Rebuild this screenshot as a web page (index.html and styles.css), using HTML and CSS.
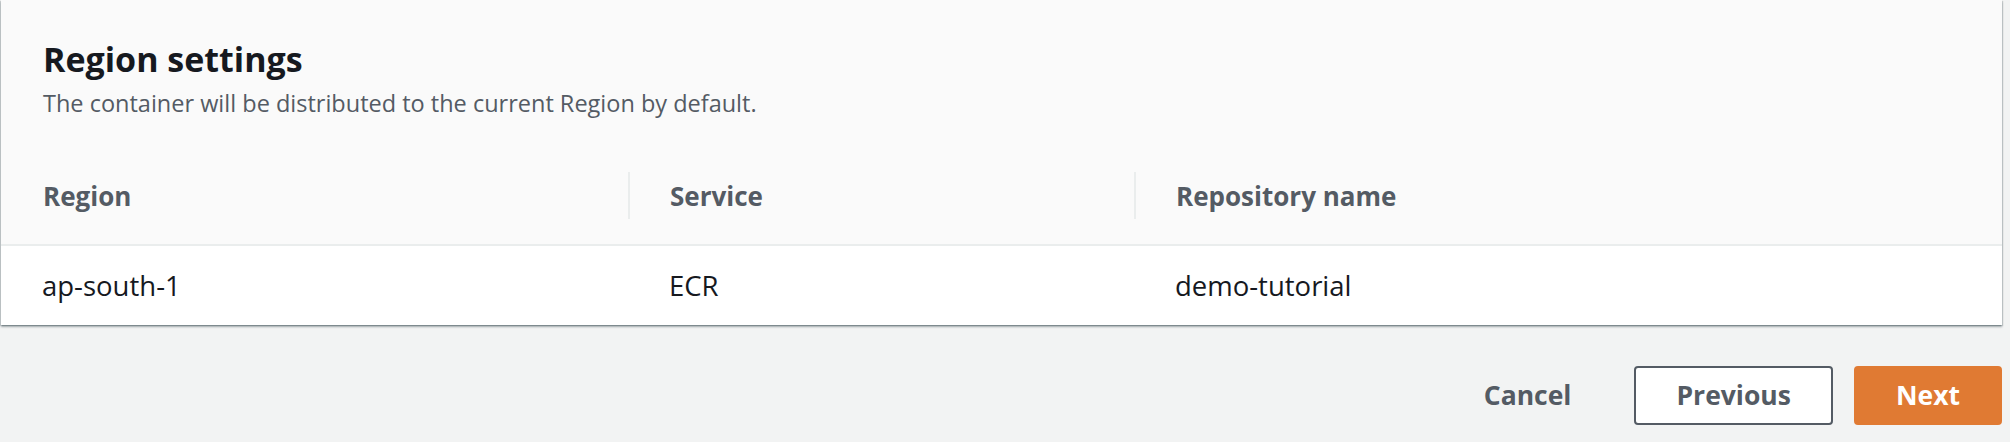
FILE: index.html
```html
<!DOCTYPE html>
<html lang="en">
<head>
<meta charset="utf-8">
<title>Region settings</title>
<link rel="stylesheet" href="styles.css">
</head>
<body>
  <section class="card">
    <header class="card-header">
      <h2 class="card-title">Region settings</h2>
      <p class="card-desc">The container will be distributed to the current Region by default.</p>
    </header>
    <table class="region-table">
      <colgroup>
        <col class="col-region">
        <col class="col-service">
        <col class="col-repo">
      </colgroup>
      <thead>
        <tr>
          <th>Region</th>
          <th class="sep">Service</th>
          <th class="sep">Repository name</th>
        </tr>
      </thead>
      <tbody>
        <tr>
          <td>ap-south-1</td>
          <td>ECR</td>
          <td>demo-tutorial</td>
        </tr>
      </tbody>
    </table>
  </section>
  <footer class="actions">
    <button class="btn btn-link" type="button">Cancel</button>
    <button class="btn btn-normal" type="button">Previous</button>
    <button class="btn btn-primary" type="button">Next</button>
  </footer>
</body>
</html>
```
FILE: styles.css
```css
html, body {
  margin: 0;
  padding: 0;
}

body {
  background: #f2f3f3;
  font-family: "Open Sans", "Noto Sans", "Liberation Sans", sans-serif;
  color: #16191f;
  width: 2010px;
  height: 442px;
  overflow: hidden;
}

.card {
  margin: 0 8px 0 1px;
  background: #ffffff;
  box-shadow: 0 2px 2px rgba(0, 28, 36, 0.3),
              1px 1px 1px rgba(0, 28, 36, 0.15),
              -1px 1px 1px rgba(0, 28, 36, 0.15);
}

.card-header {
  background: #fafafa;
  padding: 39px 40px 30px 42px;
}

.card-title {
  margin: 0;
  font-size: 34px;
  line-height: 40px;
  font-weight: 700;
  color: #16191f;
}

.card-desc {
  margin: 9px 0 0 0;
  font-size: 23.5px;
  line-height: 30px;
  color: #545b64;
}

.region-table {
  width: 100%;
  border-collapse: collapse;
  table-layout: fixed;
}

.col-region { width: 627px; }
.col-service { width: 506px; }
.col-repo { width: auto; }

.region-table th {
  background: #fafafa;
  border-bottom: 2px solid #eaeded;
  text-align: left;
  font-size: 26px;
  line-height: 34px;
  font-weight: 700;
  color: #545b64;
  padding: 31px 40px 31px 42px;
  position: relative;
}

.region-table th.sep::before {
  content: "";
  position: absolute;
  left: 0;
  top: 24px;
  height: 47px;
  width: 2px;
  background: #eaeded;
}

.region-table td {
  font-size: 27.5px;
  line-height: 37px;
  color: #16191f;
  padding: 21px 40px 21px 41px;
  background: #ffffff;
}

.actions {
  display: flex;
  justify-content: flex-end;
  gap: 21px;
  padding: 41px 8px 0 0;
}

.btn {
  font-family: "Open Sans", "Noto Sans", "Liberation Sans", sans-serif;
  font-size: 26.5px;
  line-height: 35px;
  font-weight: 700;
  padding: 10px 40px;
  border: 2px solid transparent;
  border-radius: 4px;
  background: transparent;
  cursor: pointer;
}

.btn-link {
  color: #545b64;
}

.btn-normal {
  background: #ffffff;
  border-color: #545b64;
  color: #545b64;
}

.btn-primary {
  background: #e07a33;
  border-color: #e07a33;
  color: #ffffff;
}
```
